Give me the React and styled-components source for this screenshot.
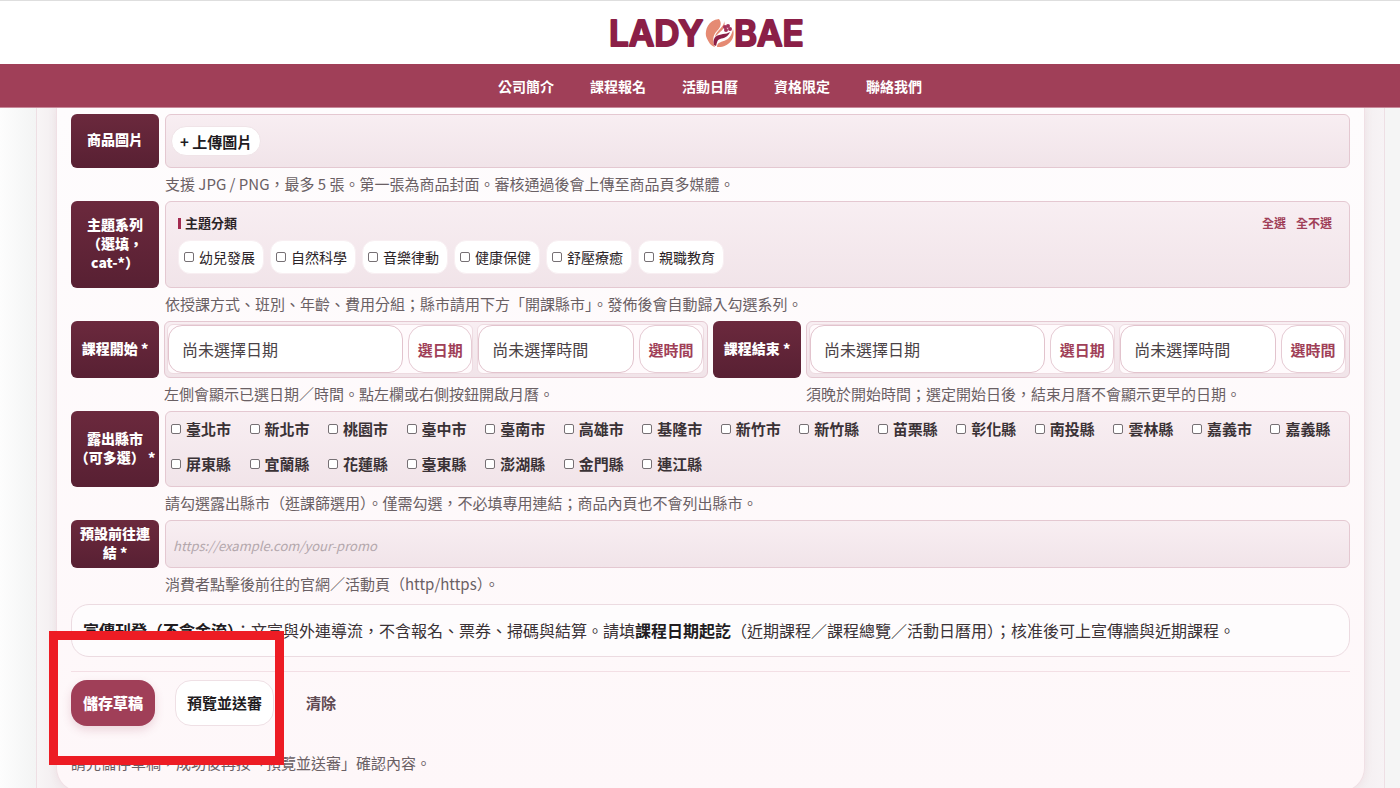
import styled, { createGlobalStyle } from 'styled-components'

const navItems = ['公司簡介', '課程報名', '活動日曆', '資格限定', '聯絡我們']
const themes = ['幼兒發展', '自然科學', '音樂律動', '健康保健', '舒壓療癒', '親職教育']
const cities = [
    '臺北市', '新北市', '桃園市', '臺中市', '臺南市', '高雄市', '基隆市', '新竹市',
    '新竹縣', '苗栗縣', '彰化縣', '南投縣', '雲林縣', '嘉義市', '嘉義縣', '屏東縣',
    '宜蘭縣', '花蓮縣', '臺東縣', '澎湖縣', '金門縣', '連江縣'
]

const GlobalStyle = createGlobalStyle`
    *{ box-sizing: border-box; }
    body{
        margin: 0;
        font-family: "Noto Sans CJK TC", "Noto Sans", sans-serif;
        color: #2b2327;
        background-color: #fbfbfb;
    }
    button, input{ font-family: inherit; }
`

//#     --- Page
const Page = styled.div`
    display: flex;
    flex-direction: column;
    height: 100vh;
    overflow: hidden;
`
const Brand = styled.header`
    display: flex;
    flex: none;
    justify-content: center;
    align-items: center;
    height: 64px;
    padding-left: 20px;
    border-top: 1px solid #dedede;
    background-color: white;
`
const Nav = styled.nav`
    display: flex;
    flex: none;
    justify-content: center;
    align-items: center;
    gap: 36px;
    height: 43px;
    padding-left: 20px;
    background-color: #a03f58;
    box-shadow: 0 1px 0 #c98a9b;
    z-index: 1;
`
const NavLink = styled.a`
    color: white;
    font-size: 14px;
    line-height: 20px;
    font-weight: 700;
    text-decoration: none;
`
const Main = styled.main`
    flex: 1;
    min-height: 0;
    padding: 0 15px 0 36px;
    background: linear-gradient(90deg, #fdfdfd 0, #f3f4f4 36px, #f5f5f5 100%);
`
const Frame = styled.div`
    padding: 0 19px;
    border: solid #eedfe4;
    border-width: 0 1px;
    background: linear-gradient(90deg, #f8f5f6 0, #f3eef0 20px, #f3eef0 98%, #f7f3f5 100%);
    height: 100%;
`
const Panel = styled.form`
    padding: 7px 14px 16px;
    border: 1px solid #f0e0e5;
    border-top: none;
    border-radius: 0 0 24px 24px;
    background: linear-gradient(#fefcfd, #fef7f9);
    box-shadow: 0 0 8px #a03f5814;
`

//#     --- Form rows
const Row = styled.div`
    display: grid;
    grid-template-columns: ${ ({ $double }) => $double ? "88px 1fr 88px 1fr" : "88px 1fr" };
    column-gap: ${ ({ $double }) => $double ? 5 : 6 }px;
`
const Caption = styled.div`
    display: flex;
    align-items: center;
    justify-content: center;
    padding: 0 3px 3px;
    border-radius: 6px;
    background: linear-gradient(#6b293d, #582033);
    color: white;
    font-size: 14px;
    line-height: 19px;
    font-weight: 900;
    text-align: center;
`
const Field = styled.div`
    min-width: 0;
    min-height: ${ ({ $height }) => $height }px;
    padding: ${ ({ $padding }) => $padding || "0" };
    border: 1px solid #e4c8d1;
    border-radius: 6px;
    background: linear-gradient(#f8eef2, #f1e4e9);
`
const Hint = styled.p`
    grid-column: ${ ({ $column }) => $column || 2 };
    margin: 0;
    padding: 4px 0 5px;
    color: #6a6064;
    font-size: 15px;
    line-height: 24px;
`
const UploadButton = styled.button`
    height: 30px;
    padding: 0 8px;
    border: 1px solid #f0e4e8;
    border-radius: 15px;
    background-color: white;
    color: #221c1f;
    font-size: 15px;
    font-weight: 600;
`
const Tick = styled.input`
    appearance: none;
    flex: none;
    width: 10px;
    height: 10px;
    margin: 0;
    border: 1px solid #767074;
    border-radius: 2px;
    background-color: white;
    &:checked{ background-color: #a03f58; }
`

//#     --- Themes
const ThemeHead = styled.div`
    display: flex;
    align-items: center;
    gap: 10px;
    height: 20px;
    margin-bottom: 7px;
`
const ThemeTitle = styled.span`
    flex: 1;
    display: flex;
    align-items: center;
    gap: 4px;
    font-size: 13px;
    line-height: 20px;
    font-weight: 700;
    &::before{
        content: "";
        width: 3px;
        height: 11px;
        background-color: #a32a50;
    }
`
const TextButton = styled.button`
    padding: 0;
    border: none;
    background: none;
    color: #a03f58;
    font-size: 12px;
    line-height: 20px;
    font-weight: 700;
`
const Chips = styled.div`
    display: flex;
    flex-wrap: wrap;
    gap: 6px;
`
const Chip = styled.label`
    display: flex;
    align-items: center;
    gap: 5px;
    height: 34px;
    padding: 0 8px 0 5px;
    border: 1px solid #f8eff2;
    border-radius: 12px;
    background-color: white;
    font-size: 14px;
    line-height: 20px;
`

//#     --- Date and time
const Pickers = styled(Field)`
    display: grid;
    grid-template-columns: 27fr 20fr;
    gap: 4px;
`
const Picker = styled.div`
    display: flex;
    gap: 5px;
    min-width: 0;
    border: 1px solid #eedbe1;
    border-radius: 6px;
    background-color: #fffafc;
`
const PickerInput = styled.input`
    flex: 1;
    min-width: 0;
    padding: 0 13px;
    border: 1px solid #e2c3cd;
    border-radius: 14px;
    background-color: white;
    color: #4a4246;
    font-size: 16px;
    &::placeholder{ color: #4a4246; opacity: 1; }
`
const PickerButton = styled.button`
    flex: none;
    width: 64px;
    padding: 0;
    border: 1px solid #e6cbd4;
    border-radius: 16px;
    background-color: white;
    color: #a03f58;
    font-size: 15px;
    font-weight: 700;
`

//#     --- Cities
const Cities = styled(Field)`
    display: grid;
    grid-template-columns: repeat(auto-fill, minmax(76px, 1fr));
    align-content: start;
    row-gap: 11px;
`
const City = styled.label`
    display: flex;
    align-items: center;
    gap: 5px;
    font-size: 15px;
    line-height: 24px;
    font-weight: 700;
    color: #3a3236;
`
const LinkInput = styled.input`
    min-width: 0;
    height: 48px;
    padding: 2px 7px 0;
    border: 1px solid #e4c8d1;
    border-radius: 6px;
    background: linear-gradient(#f8eef2, #f1e4e9);
    font-size: 13px;
    &::placeholder{ color: #b3a7ac; font-style: italic; opacity: 1; }
`

//#     --- Notice and actions
const Notice = styled.p`
    margin: 3px 0 14px;
    padding: 13px 11px;
    border: 1px solid #ecdbe1;
    border-radius: 18px;
    background-color: #fefcfd;
    color: #3a3236;
    font-size: 16px;
    line-height: 25px;
    & b{ color: #221c1f; }
`
const Actions = styled.div`
    position: relative;
    display: flex;
    gap: 20px;
    padding: 8px 0 25px;
    border-top: 1px solid #f3dfe5;
`
const ActionButton = styled.button`
    height: 46px;
    padding: 0 11px 2px;
    border: 1px solid ${ ({ $border }) => $border || "transparent" };
    border-radius: 16px;
    background-color: ${ ({ $fill }) => $fill || "transparent" };
    color: ${ ({ $color }) => $color };
    font-size: 15px;
    font-weight: ${ ({ $weight }) => $weight || 600 };
    box-shadow: ${ ({ $shadow }) => $shadow ? "0 4px 10px #a03f5830" : "none" };
`
const Status = styled.p`
    margin: 0;
    color: #6a6064;
    font-size: 15px;
    line-height: 24px;
`
const Highlight = styled.div`
    position: absolute;
    left: -22px;
    top: -41px;
    width: 235px;
    height: 134px;
    border: 9px solid #ed1c24;
    pointer-events: none;
`

const Logo = () => (
    <svg width="200" height="48" viewBox="0 -6 200 48" overflow="visible" role="img" aria-label="LADY BAE">
        <g fill="#8b1f47" stroke="#8b1f47" strokeWidth="2" strokeLinejoin="round" fontFamily="Inter, sans-serif" fontSize="35" fontWeight="600">
            <text x="-1" y="31">LADY</text>
            <text x="124" y="31">BAE</text>
        </g>
        <g fill="#e58a73">
            <path d="M109 4C98 5 95 15 96 21C98 27 101 31 105 32C102 25 103 20 107 16C111 12 112 8 109 4Z" />
            <path d="M114 6C115 12 106 15 105 22C109 17 117 14 114 6Z" />
            <path d="M123 14C126 24 118 33 107 32C107 27 112 27 116 25C120 23 122 19 123 14Z" />
        </g>
        <path d="M104 30C102 21 108 20 113 19C116 19 118 18 120 17C118 22 114 23 110 24C107 25 107 28 106 31Z" fill="#8b1f47" />
        <g fill="#a3315a">
            <circle cx="115" cy="12" r="2" />
            <circle cx="118" cy="11" r="2" />
            <circle cx="120" cy="14" r="2" />
            <circle cx="116" cy="15" r="2" />
        </g>
    </svg>
)

const DateTime = ({ name }) => (
    <Pickers $height={ 57 } $padding="2px 3px 3px 2px">
        <Picker>
            <PickerInput readOnly aria-label={ `${ name }日期` } placeholder="尚未選擇日期" />
            <PickerButton type="button">選日期</PickerButton>
        </Picker>
        <Picker>
            <PickerInput readOnly aria-label={ `${ name }時間` } placeholder="尚未選擇時間" />
            <PickerButton type="button">選時間</PickerButton>
        </Picker>
    </Pickers>
)

const App = () => {
    return(
        <Page>
            <GlobalStyle />
            <Brand><Logo /></Brand>
            <Nav>
                { navItems.map( item => <NavLink key={ item } href="#">{ item }</NavLink> ) }
            </Nav>
            <Main>
                <Frame>
                    <Panel onSubmit={ e => e.preventDefault() }>
                        <Row>
                            <Caption>商品圖片</Caption>
                            <Field $height={ 54 } $padding="11px 5px">
                                <UploadButton type="button">+ 上傳圖片</UploadButton>
                            </Field>
                            <Hint>支援 JPG / PNG，最多 5 張。第一張為商品封面。審核通過後會上傳至商品頁多媒體。</Hint>
                        </Row>

                        <Row>
                            <Caption>主題系列（選填，cat-*）</Caption>
                            <Field $height={ 87 } $padding="11px 17px 11px 12px">
                                <ThemeHead>
                                    <ThemeTitle>主題分類</ThemeTitle>
                                    <TextButton type="button">全選</TextButton>
                                    <TextButton type="button">全不選</TextButton>
                                </ThemeHead>
                                <Chips>
                                    { themes.map( theme => (
                                        <Chip key={ theme }><Tick type="checkbox" />{ theme }</Chip>
                                    ) ) }
                                </Chips>
                            </Field>
                            <Hint>依授課方式、班別、年齡、費用分組；縣市請用下方「開課縣市」。發佈後會自動歸入勾選系列。</Hint>
                        </Row>

                        <Row $double>
                            <Caption>課程開始 *</Caption>
                            <DateTime name="課程開始" />
                            <Caption>課程結束 *</Caption>
                            <DateTime name="課程結束" />
                            <Hint>左側會顯示已選日期／時間。點左欄或右側按鈕開啟月曆。</Hint>
                            <Hint $column={ 4 }>須晚於開始時間；選定開始日後，結束月曆不會顯示更早的日期。</Hint>
                        </Row>

                        <Row>
                            <Caption>露出縣市（可多選） *</Caption>
                            <Cities $height={ 76 } $padding="5px 0 10px 5px">
                                { cities.map( city => (
                                    <City key={ city }><Tick type="checkbox" />{ city }</City>
                                ) ) }
                            </Cities>
                            <Hint>請勾選露出縣市（逛課篩選用）。僅需勾選，不必填專用連結；商品內頁也不會列出縣市。</Hint>
                        </Row>

                        <Row>
                            <Caption as="label" htmlFor="promo">預設前往連結 *</Caption>
                            <LinkInput id="promo" type="url" placeholder="https://example.com/your-promo" />
                            <Hint>消費者點擊後前往的官網／活動頁（http/https）。</Hint>
                        </Row>

                        <Notice>
                            <b>宣傳刊登（不含金流）</b>：文宣與外連導流，不含報名、票券、掃碼與結算。請填<b>課程日期起訖</b>（近期課程／課程總覽／活動日曆用）；核准後可上宣傳牆與近期課程。
                        </Notice>

                        <Actions>
                            <ActionButton type="submit" $fill="#a03f58" $color="white" $weight={ 900 } $shadow>儲存草稿</ActionButton>
                            <ActionButton type="button" $fill="white" $border="#efe0e5" $color="#221c1f">預覽並送審</ActionButton>
                            <ActionButton type="reset" $color="#5f4a52">清除</ActionButton>
                            <Highlight />
                        </Actions>
                        <Status>請先儲存草稿，成功後再按「預覽並送審」確認內容。</Status>
                    </Panel>
                </Frame>
            </Main>
        </Page>
    )
}
export default App
